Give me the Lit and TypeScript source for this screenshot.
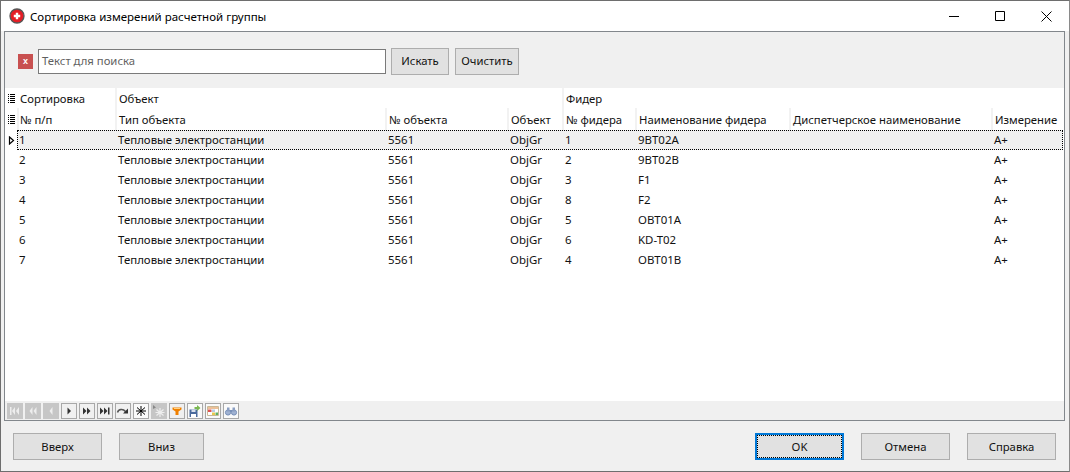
import { LitElement, html, css, svg } from "lit";
import { customElement } from "lit/decorators.js";

const rows = [
  ["1", "1", "9BT02A"],
  ["2", "2", "9BT02B"],
  ["3", "3", "F1"],
  ["4", "8", "F2"],
  ["5", "5", "OBT01A"],
  ["6", "6", "KD-T02"],
  ["7", "4", "OBT01B"],
];

const lines = svg`<path d="M0 1.500h1M0 3.500h1M0 5.500h1M0 7.500h1M0 9.500h1M2 1.500h5M2 3.500h5M2 5.500h5M2 7.500h5M2 9.500h5" stroke="#000" stroke-width="1" fill="none"/>`;
const handle = html`<svg width="7" height="11" viewBox="0 0 7 11">${lines}</svg>`;

const navIcons = [
  { d: true, p: svg`<path d="M3 4v8h1.500V4zM8 4 5 8l3 4zM12 4 9 8l3 4z" fill="#eee"/>` },
  { d: true, p: svg`<path d="M7.500 4 4.500 8l3 4zM11.500 4 8.500 8l3 4z" fill="#eee"/>` },
  { d: true, p: svg`<path d="M9.500 4 6.500 8l3 4z" fill="#eee"/>` },
  { p: svg`<path d="M6.500 4.500l3.500 3.500-3.500 3.500z" fill="#333"/>` },
  { p: svg`<path d="M4 4.500l3.500 3.500-3.500 3.500zM8 4.500l3.500 3.500-3.500 3.500z" fill="#333"/>` },
  { p: svg`<path d="M3 4.500l3.500 3.500-3.500 3.500zM7 4.500l3.500 3.500-3.500 3.500zM11 4.500h1.500v7H11z" fill="#333"/>` },
  { p: svg`<path d="M2.500 9.500C3.500 6 8 5.500 10.500 8.500" stroke="#555" stroke-width="1.500" fill="none"/><path d="M8 10.500h5v-5z" fill="#333"/>` },
  { w: true, p: svg`<path d="M8 3v10M4 4.500l8 7M12 4.500l-8 7M3 8h10" stroke="#000" stroke-width="1"/>` },
  { d: true, p: svg`<path d="M9 5v9M5.500 6.500l7 6M12.500 6.500l-7 6M4.500 9.500h9" stroke="#eee" stroke-width="1.200"/><path d="M2 2l3 2.500-3 1.500z" fill="#888"/>` },
  { p: svg`<path d="M3.500 4.500h9v2L9.500 8.500V12h-3V8.500l-3-2z" fill="#f08000"/><path d="M5 5.500h6" stroke="#ffd080"/>` },
  { w: true, p: svg`<path d="M2.500 6.500h8V14h-8z" fill="#4a6a9c"/><path d="M4.500 6.500h4v2.500h-4z" fill="#d8e0ec"/><path d="M4 11h5v3H4z" fill="#fff"/><path d="M7.500 6V4H10V2l3.500 3L10 8V6z" fill="#7ab850"/>` },
  { w: true, p: svg`<path d="M2.500 3.500h11v9h-11z" fill="#fff" stroke="#c8b898"/><path d="M3 4h10v2H3z" fill="#ecc098"/><path d="M3 6.500h3.500V9H3z" fill="#e05050"/><path d="M7 9.500h3V12H7z" fill="#e8c850"/><path d="M10.500 9.500H13V12h-2.500z" fill="#60b060"/><path d="M7 6.500h3V9H7z" fill="#b8cce4"/>` },
  { w: true, p: svg`<circle cx="5" cy="9.500" r="2.600" fill="#a0b2d2" stroke="#7890b8"/><circle cx="11" cy="9.500" r="2.600" fill="#a0b2d2" stroke="#7890b8"/><path d="M4 4.500h2.500v4H4zM9.500 4.500H12v4H9.500z" fill="#8a9ec2"/><path d="M7 7h2v2H7z" fill="#7890b8"/>` },
];

@customElement("app-root")
export class AppRoot extends LitElement {
  static styles = css`
    :host { display: block; width: 1070px; height: 472px; overflow: hidden; }
    * { box-sizing: border-box; }
    .window {
      width: 1070px; height: 472px; display: flex; flex-direction: column;
      border: 1px solid #6e6e6e; border-right-color: #8a8a8a; background: #f0f0f0;
      font: 11.3px "Noto Sans", "Open Sans", sans-serif; color: #111;
    }
    .title { height: 30px; flex: none; background: #fff; display: flex; align-items: center; padding-left: 8px; }
    .title svg.logo { margin-right: 5px; }
    .title span { font-size: 11.5px; flex: 1; color: #000; }
    .ctl { width: 46px; height: 30px; display: flex; align-items: center; justify-content: center; }
    .panel {
      height: 390px; flex: none; margin: 0 4px 0 3px; border: 1px solid #82878c;
      display: flex; flex-direction: column; background: #f0f0f0;
    }
    .search { height: 56px; flex: none; display: flex; align-items: center; padding: 2px 0 0 13px; }
    .xbtn {
      width: 15px; height: 15px; background: #c85050; color: #fff; font: bold 9px "Liberation Sans", sans-serif;
      display: flex; align-items: center; justify-content: center; margin-right: 5px; padding-bottom: 1px;
    }
    .input {
      width: 348px; height: 25px; background: #fff; border: 1px solid #7a7a7a; padding: 0 0 1px 3px;
      display: flex; align-items: center; color: #5f5f5f; margin-right: 5px;
    }
    .btn {
      border: 1px solid #adadad; background: #e1e1e1; display: flex; align-items: center; justify-content: center;
      color: #111; height: 27px; padding-bottom: 1px;
    }
    .find { width: 58px; margin-right: 6px; }
    .clear { width: 64px; }
    .grid { flex: 1; background: #fff; overflow: hidden; }
    .row {
      display: grid;
      grid-template-columns: 12px 98px 270px 122px 55px 73px 154px 202px 1fr;
      align-items: center;
    }
    .head1 { height: 20px; }
    .head2 { height: 22px; }
    .h { height: 100%; padding-left: 2px; display: flex; align-items: center; border-left: 2px solid #f2f2f2; white-space: nowrap; }
    .h.first { padding-left: 1px; }
    .head1 .h { padding-top: 1px; }
    .ind { height: 100%; display: flex; align-items: center; justify-content: center; }
    .head1 .h.none { border-left-color: transparent; }
    .data { height: 20px; position: relative; isolation: isolate; font-size: 11.45px; }
    .data.sel::before {
      content: ""; position: absolute; z-index: -1; left: 12px; right: 1px; top: 0; bottom: 0;
      background: #f0f0f0; border: 1px dotted #000;
    }
    .c { padding-left: 3px; white-space: nowrap; line-height: 18px; }
    .c.first { padding-left: 2px; }
    .nav { height: 19px; flex: none; background: #f0f0f0; display: flex; align-items: center; gap: 2px; padding-left: 2px; }
    .nb { width: 16px; height: 16px; border: 1px solid #a8a8a8; background: #f0f0f0; display: flex; }
    .nb.dis { background: #c6c6c6; border-color: #c6c6c6; }
    .nb.wh { background: #fafafa; }
    .nb svg { margin: -1px; flex: none; }
    .foot { flex: 1; display: flex; align-items: flex-start; padding: 12px 13px 0 12px; }
    .foot .btn { width: 89px; height: 27px; }
    .foot .down { margin-left: 17px; width: 85px; }
    .spacer { flex: 1; }
    .foot .ok { border: 2px solid #0078d7; position: relative; }
    .ok::after { content: ""; position: absolute; inset: 0; border: 1px dotted #000; }
    .mid { margin: 0 17px; }
  `;

  render() {
    return html`<div class="window">
      <div class="title">
        <svg class="logo" width="16" height="16" viewBox="0 0 16 16">
          <circle cx="8" cy="8" r="7" fill="#e41e26" stroke="#555" stroke-width="1.300"/>
          <path d="M6.800 4.800h2.400v2h2v2.400h-2v2H6.800v-2h-2V6.800h2z" fill="#fff"/>
        </svg>
        <span>Сортировка измерений расчетной группы</span>
        <div class="ctl"><svg width="10" height="10" viewBox="0 0 10 10"><path d="M0 5.500h10" stroke="#000"/></svg></div>
        <div class="ctl"><svg width="10" height="10" viewBox="0 0 10 10"><path d="M.5.500h9v9h-9z" fill="none" stroke="#000"/></svg></div>
        <div class="ctl"><svg width="11" height="11" viewBox="0 0 11 11"><path d="M.5.500l10 10M10.500.500l-10 10" stroke="#000"/></svg></div>
      </div>
      <div class="panel">
        <div class="search">
          <div class="xbtn">x</div>
          <div class="input">Текст для поиска</div>
          <div class="btn find">Искать</div>
          <div class="btn clear">Очистить</div>
        </div>
        <div class="grid">
          <div class="row head1">
            <div class="ind">${handle}</div>
            <div class="h none first">Сортировка</div>
            <div class="h">Объект</div>
            <div class="h none"></div><div class="h none"></div>
            <div class="h">Фидер</div>
            <div class="h none"></div><div class="h none"></div><div class="h none"></div>
          </div>
          <div class="row head2">
            <div class="ind">${handle}</div>
            <div class="h first">№ п/п</div>
            <div class="h">Тип объекта</div>
            <div class="h">№ объекта</div>
            <div class="h">Объект</div>
            <div class="h">№ фидера</div>
            <div class="h">Наименование фидера</div>
            <div class="h">Диспетчерское наименование</div>
            <div class="h">Измерение</div>
          </div>
          ${rows.map((r, i) => html`<div class="row data ${i === 0 ? "sel" : ""}">
            <div class="ind">${i === 0 ? html`<svg width="7" height="9" viewBox="0 0 7 9"><path d="M1.500 1l4 3.500-4 3.500z" fill="#fff" stroke="#000" stroke-width="1.200"/></svg>` : ""}</div>
            <div class="c first">${r[0]}</div>
            <div class="c">Тепловые электростанции</div>
            <div class="c">5561</div>
            <div class="c">ObjGr</div>
            <div class="c">${r[1]}</div>
            <div class="c">${r[2]}</div>
            <div class="c"></div>
            <div class="c">A+</div>
          </div>`)}
        </div>
        <div class="nav">
          ${navIcons.map((n) => html`<div class="nb ${n.d ? "dis" : ""} ${n.w ? "wh" : ""}"><svg width="16" height="16" viewBox="0 0 16 16">${n.p}</svg></div>`)}
        </div>
      </div>
      <div class="foot">
        <div class="btn">Вверх</div>
        <div class="btn down">Вниз</div>
        <div class="spacer"></div>
        <div class="btn ok">OK</div>
        <div class="btn mid">Отмена</div>
        <div class="btn">Справка</div>
      </div>
    </div>`;
  }
}
